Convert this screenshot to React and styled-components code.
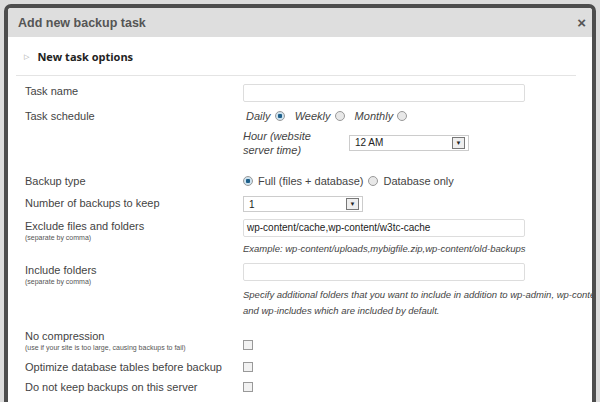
import React from "react";
import styled, { createGlobalStyle } from "styled-components";

const G = createGlobalStyle`
  html,body{margin:0;background:#dcdcdc;font-family:"Liberation Sans",Arial,sans-serif;overflow:hidden;}
`;
const Modal = styled.div`
  margin:4px 0 0 4px;width:584px;height:420px;border:4px solid #4d4d4d;border-radius:7px;background:#fff;overflow:hidden;
`;
const Title = styled.div`
  height:29px;background:#dedede;display:flex;align-items:center;justify-content:space-between;padding:0 6px 0 10px;
  font-size:12.5px;font-weight:bold;color:#555;
`;
const Close = styled.span`font-size:15px;font-weight:bold;color:#555;`;
const Body = styled.div`padding:0 12px 0 8px;`;
const Section = styled.div`
  height:38px;display:flex;align-items:center;gap:8px;padding-left:8px;border-bottom:1px solid #e4e4e4;margin-right:4px;
  font-size:11px;font-weight:bold;color:#222;font-family:"Open Sans","DejaVu Sans",sans-serif;
`;
const Arrow = styled.span`font-size:7px;color:#999;`;
const Row = styled.div`
  display:grid;grid-template-columns:218px 1fr;padding-left:9px;margin-top:${p=>p.mt||0}px;
  font-size:11px;color:#444;
`;
const Label = styled.div`line-height:14px;`;
const Small = styled.div`font-size:7px;line-height:10px;color:#555;`;
const Input = styled.div`
  width:277px;height:16px;border:1px solid #ddd;border-radius:2px;font-size:10px;line-height:16px;padding-left:3px;color:#222;
`;
const Select = styled.div`
  width:${p=>p.w}px;height:16px;border:1px solid #ccc;display:flex;align-items:center;justify-content:space-between;
  padding:0 3px 0 5px;font-size:10px;color:#222;box-sizing:border-box;
`;
const Drop = styled.span`
  width:11px;height:10px;border:1px solid #777;background:#eee;display:flex;align-items:center;justify-content:center;font-size:6px;color:#222;
`;
const Line = styled.div`display:flex;align-items:center;gap:${p=>p.gap||6}px;font-style:${p=>p.it?"italic":"normal"};line-height:14px;`;
const Radio = styled.span`
  width:8px;height:8px;border-radius:50%;border:1px solid #999;background:${p=>p.on?"radial-gradient(circle,#1d5f8a 0 2px,#cfe3ef 2.5px)":"#e8e8e8"};display:inline-block;
`;
const Check = styled.span`width:8px;height:8px;border:1px solid #999;background:#f2f2f2;display:inline-block;`;
const Note = styled.div`font-style:italic;font-size:9.5px;line-height:16px;color:#444;white-space:nowrap;margin-top:${p=>p.mt||0}px;`;

export default function App(){
  return (<>
    <G/>
    <Modal>
      <Title>Add new backup task<Close>×</Close></Title>
      <Body>
        <Section><Arrow>▷</Arrow>New task options</Section>
        <Row mt={8}><Label>Task name</Label><Input/></Row>
        <Row mt={7}><Label>Task schedule</Label>
          <div>
            <Line it gap={4}>&nbsp;Daily <Radio on/>&nbsp;&nbsp;Weekly <Radio/>&nbsp;&nbsp;Monthly <Radio/></Line>
            <Line style={{marginTop:6}} gap={10}>
              <Label style={{fontStyle:"italic",width:96}}>Hour (website server time)</Label>
              <Select w={120}>12 AM<Drop>▼</Drop></Select>
            </Line>
          </div>
        </Row>
        <Row mt={17}><Label>Backup type</Label>
          <Line gap={5}><Radio on/>Full (files + database)<Radio/>Database only</Line></Row>
        <Row mt={8}><Label>Number of backups to keep</Label><Select w={120}>1<Drop>▼</Drop></Select></Row>
        <Row mt={7}><div><Label>Exclude files and folders</Label><Small>(separate by comma)</Small></div>
          <div><Input>wp-content/cache,wp-content/w3tc-cache</Input>
          <Note mt={4}>Example: wp-content/uploads,mybigfile.zip,wp-content/old-backups</Note></div></Row>
        <Row mt={6}><div><Label>Include folders</Label><Small>(separate by comma)</Small></div>
          <div><Input/>
          <Note mt={6}>Specify additional folders that you want to include in addition to wp-admin, wp-content<br/>and wp-includes which are included by default.</Note></div></Row>
        <Row mt={10}><div><Label>No compression</Label><Small>(use if your site is too large, causing backups to fail)</Small></div>
          <Line style={{marginTop:7}}><Check/></Line></Row>
        <Row mt={7}><Label>Optimize database tables before backup</Label><Line><Check/></Line></Row>
        <Row mt={6}><Label>Do not keep backups on this server</Label><Line><Check/></Line></Row>
      </Body>
    </Modal>
  </>);
}
